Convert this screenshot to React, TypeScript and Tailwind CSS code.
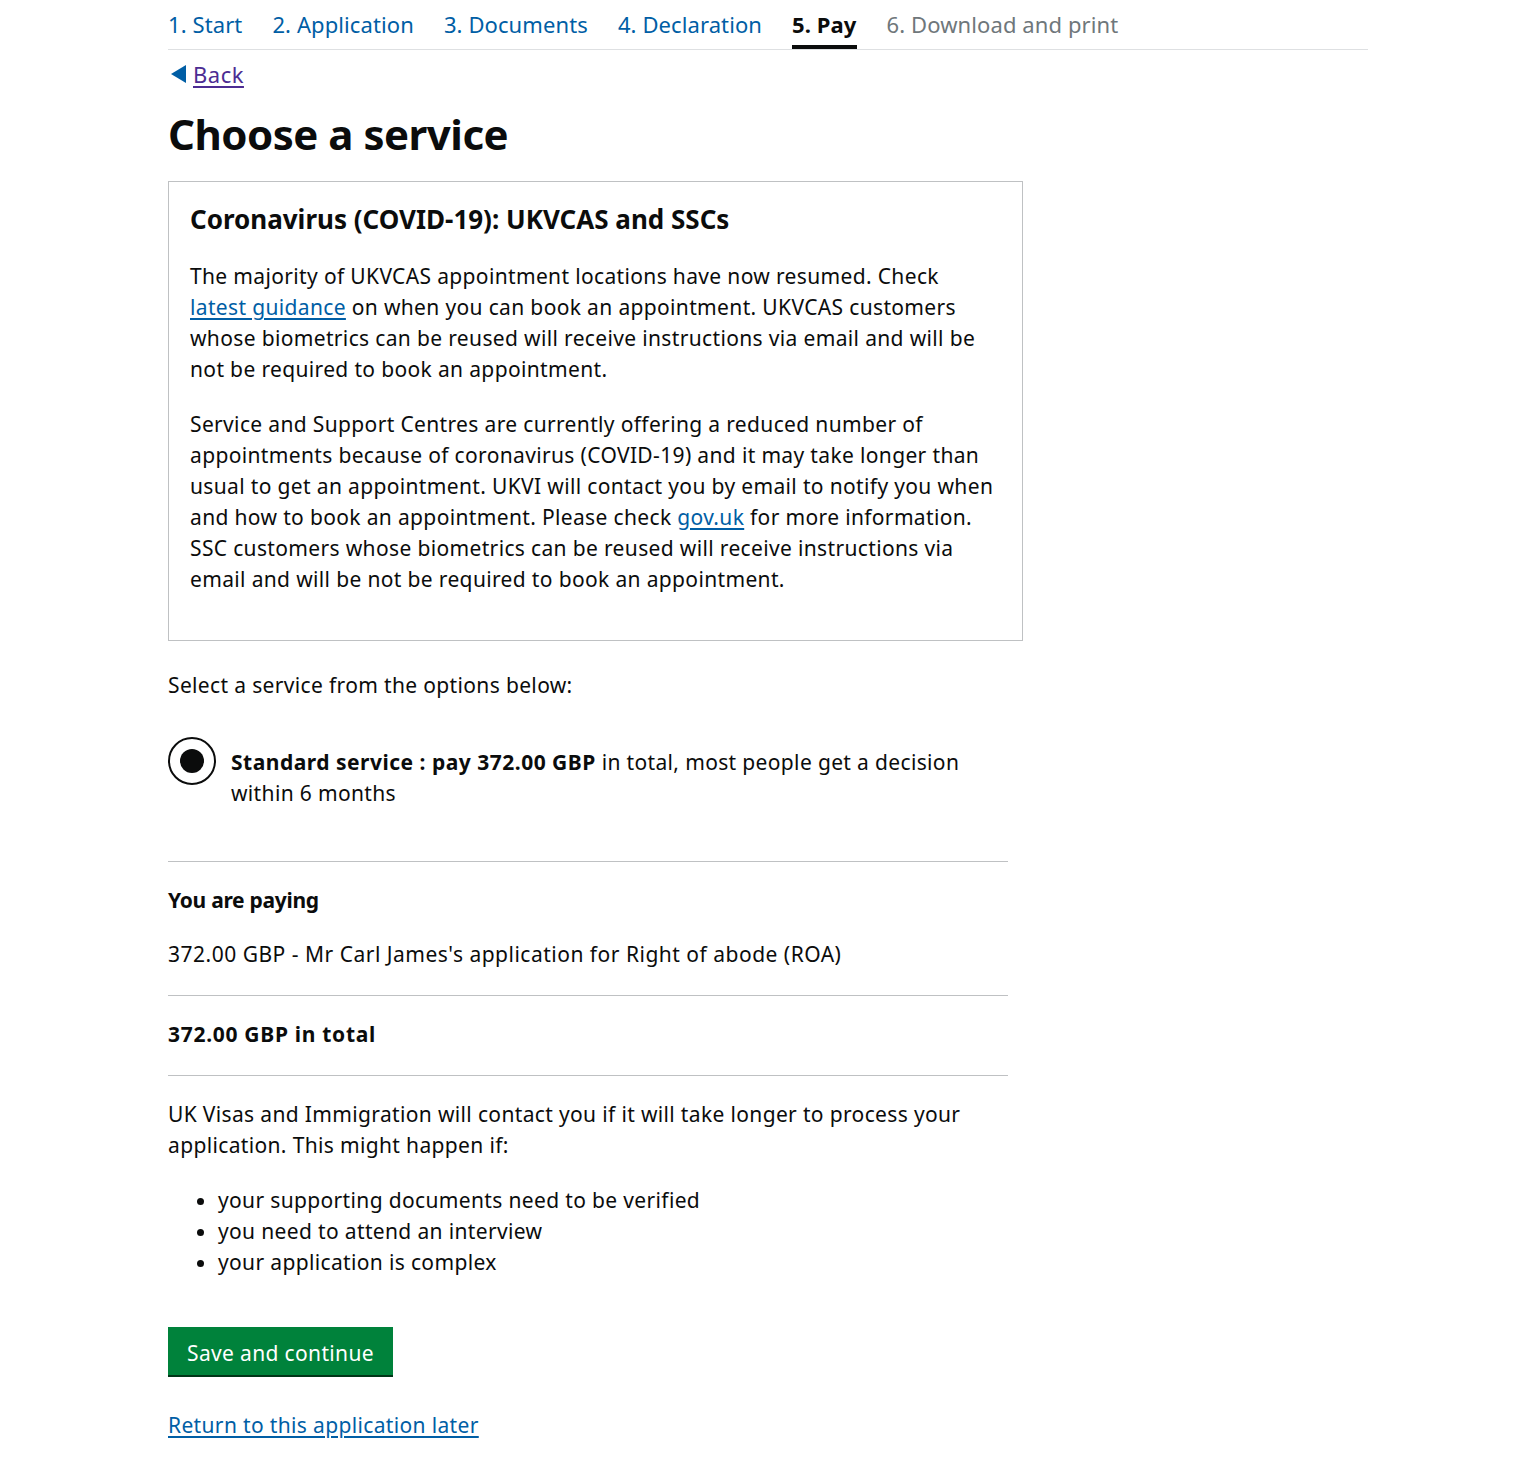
import React from "react";

const font = { fontFamily: '"Noto Sans", "Open Sans", Arial, sans-serif' };

function NavItem({ label, state }: { label: string; state: "link" | "active" | "disabled" }) {
  if (state === "active") {
    return (
      <span className="h-full border-b-4 border-[#0b0c0c] pt-[9px] font-bold text-[#0b0c0c]">{label}</span>
    );
  }
  if (state === "disabled") {
    return <span className="h-full pt-[9px] text-[#6f777b]">{label}</span>;
  }
  return (
    <a href="#" className="h-full pt-[9px] text-[#005ea5]">
      {label}
    </a>
  );
}

export default function App() {
  return (
    <div className="min-h-[1459px] bg-white text-[#0b0c0c]" style={font}>
      <div className="mx-auto w-[1200px]">
        <nav className="flex h-[50px] gap-[30px] border-b border-[#dee0e2] text-[22px] leading-[30px] tracking-[0.1px]">
          <NavItem label="1. Start" state="link" />
          <NavItem label="2. Application" state="link" />
          <NavItem label="3. Documents" state="link" />
          <NavItem label="4. Declaration" state="link" />
          <NavItem label="5. Pay" state="active" />
          <NavItem label="6. Download and print" state="disabled" />
        </nav>

        <a href="#" className="mt-[9px] flex w-fit items-center gap-[7px] text-[22px] leading-[30px] tracking-[0.5px] text-[#4c2c92]">
          <svg width="15" height="18" viewBox="0 0 15 18" className="ml-[3px]">
            <polygon points="0,9 15,0 15,18" fill="#005ea5" />
          </svg>
          <span className="underline underline-offset-[3px]">Back</span>
        </a>

        <h1 className="mt-[20px] text-[42px] font-bold leading-[50px] tracking-[-0.5px]">Choose a service</h1>

        <div className="mt-[22px] w-[855px] border border-[#bfc1c3] px-[21px] pb-[45px] pt-[19px]">
          <h2 className="text-[26px] font-bold leading-[36px]">Coronavirus (COVID-19): UKVCAS and SSCs</h2>
          <p className="mt-[24px] text-[21px] leading-[31px] tracking-[0.35px]">
            The majority of UKVCAS appointment locations have now resumed. Check
            <br />
            <a href="#" className="text-[#005ea5] underline underline-offset-[3px]">
              latest guidance
            </a>{" "}
            on when you can book an appointment. UKVCAS customers
            <br />
            whose biometrics can be reused will receive instructions via email and will be
            <br />
            not be required to book an appointment.
          </p>
          <p className="mt-[24px] text-[21px] leading-[31px] tracking-[0.35px]">
            Service and Support Centres are currently offering a reduced number of
            <br />
            appointments because of coronavirus (COVID-19) and it may take longer than
            <br />
            usual to get an appointment. UKVI will contact you by email to notify you when
            <br />
            and how to book an appointment. Please check{" "}
            <a href="#" className="text-[#005ea5] underline underline-offset-[3px]">
              gov.uk
            </a>{" "}
            for more information.
            <br />
            SSC customers whose biometrics can be reused will receive instructions via
            <br />
            email and will be not be required to book an appointment.
          </p>
        </div>

        <p className="mt-[29px] text-[21px] leading-[31px] tracking-[0.35px]">Select a service from the options below:</p>

        <div className="mt-[36px] flex w-[840px] items-start gap-[15px]">
          <div className="flex h-[48px] w-[48px] shrink-0 items-center justify-center rounded-full border-2 border-[#0b0c0c]">
            <div className="h-[24px] w-[24px] rounded-full bg-[#0b0c0c]" />
          </div>
          <p className="mt-[10px] whitespace-nowrap text-[21px] leading-[31px] tracking-[0.35px]">
            <span className="font-bold tracking-[0.5px]">Standard service : pay 372.00 GBP</span> in total, most people get a decision
            <br />
            within 6 months
          </p>
        </div>

        <div className="mt-[52px] w-[840px] border-t border-[#bfc1c3]" />
        <p className="mt-[23px] text-[21px] font-bold leading-[31px] tracking-[-0.3px]">You are paying</p>
        <p className="mt-[23px] text-[21px] leading-[31px] tracking-[0.5px]">
          372.00 GBP - Mr Carl James's application for Right of abode (ROA)
        </p>
        <div className="mt-[25px] w-[840px] border-t border-[#bfc1c3]" />
        <p className="mt-[23px] text-[21px] font-bold leading-[31px] tracking-[0.7px]">372.00 GBP in total</p>
        <div className="mt-[25px] w-[840px] border-t border-[#bfc1c3]" />

        <p className="mt-[23px] text-[21px] leading-[31px] tracking-[0.35px]">
          UK Visas and Immigration will contact you if it will take longer to process your
          <br />
          application. This might happen if:
        </p>
        <ul className="mt-[24px] list-disc pl-[50px] text-[21px] leading-[31px] tracking-[0.35px]">
          <li>your supporting documents need to be verified</li>
          <li>you need to attend an interview</li>
          <li>your application is complex</li>
        </ul>

        <button className="mt-[49px] flex h-[48px] w-[225px] items-center justify-center bg-[#00823b] pt-[3px] text-[21px] leading-[30px] tracking-[0.35px] text-white shadow-[0_2px_0_#003618]">
          Save and continue
        </button>

        <a href="#" className="mt-[35px] block w-fit text-[21px] leading-[31px] tracking-[0.35px] text-[#005ea5] underline underline-offset-[3px]">
          Return to this application later
        </a>
      </div>
    </div>
  );
}
